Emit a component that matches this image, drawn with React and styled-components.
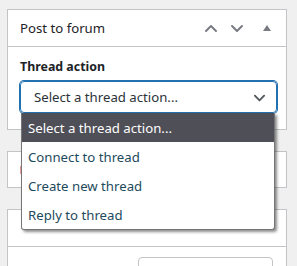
import * as React from 'react';
import styled, {createGlobalStyle} from 'styled-components';

const GlobalStyle = createGlobalStyle`
  body {
    margin: 0;
    background: #f0f0f1;
    font-family: "Noto Sans", "Open Sans", sans-serif;
    color: #1d2327;
  }
`;

const Sidebar = styled.div`
  width: 280px;
  padding: 9px 0 0 7px;
  height: 257px;
  overflow: hidden;
  display: flex;
  flex-direction: column;
  gap: 21px;
`;

const Panel = styled.div`
  position: relative;
  background: #fff;
  border: 1px solid #c3c4c7;
  flex-shrink: 0;
`;

const PanelHeader = styled.div`
  height: 36px;
  display: flex;
  align-items: center;
  padding: 0 6px 0 12px;
  border-bottom: ${(p) => (p.$open ? '1px solid #c3c4c7' : 'none')};
`;

const PanelTitle = styled.div`
  flex: 1;
  font-size: 13.2px;
  color: #1d2327;
`;

const HeaderButtons = styled.div`
  display: flex;
  align-items: center;
  gap: 8px;
  color: #787c82;
`;

const IconSlot = styled.span`
  width: ${(p) => p.$w || 18}px;
  display: flex;
  justify-content: center;
`;

const PanelBody = styled.div`
  padding: 11px 9px 16px 12px;
`;

const Label = styled.div`
  font-size: 12.4px;
  font-weight: 700;
  line-height: 18px;
  margin-bottom: 5px;
`;

const SelectBox = styled.div`
  height: 30px;
  border: 1px solid #2271b1;
  border-radius: 4px;
  box-shadow: 0 0 0 1px #2271b1;
  display: flex;
  align-items: center;
  padding: 0 10px 0 13px;
  font-size: 13.2px;
  color: #2c3338;
`;

const SelectText = styled.span`
  flex: 1;
`;

const Menu = styled.ul`
  position: absolute;
  left: 13px;
  top: 103px;
  width: 252px;
  margin: 0;
  padding: 0;
  list-style: none;
  background: #fff;
  border: 1px solid #767676;
  border-top: none;
  border-radius: 0 0 3px 3px;
  box-shadow: 2px 2px 3px rgba(0, 0, 0, 0.45);
  z-index: 5;
`;

const MenuItem = styled.li`
  height: 29px;
  display: flex;
  align-items: center;
  padding-left: 6px;
  font-size: 13.2px;
  color: ${(p) => (p.$active ? '#fff' : '#1d4a5c')};
  background: ${(p) => (p.$active ? '#4f4f58' : 'transparent')};
`;

const MiniHeader = styled.div`
  height: 35px;
  display: flex;
  align-items: center;
  padding-left: 12px;
`;

const Marker = styled.span`
  width: 4px;
  height: 8px;
  background: #d63638;
  opacity: 0.5;
`;

const TallHeader = styled.div`
  height: 36px;
  border-bottom: 1px solid #c3c4c7;
`;

const PanelRow = styled.div`
  display: flex;
  justify-content: flex-end;
  padding: 10px 13px 0 0;
`;

const TextInput = styled.div`
  width: 135px;
  height: 30px;
  border: 1px solid #c3c4c7;
  border-radius: 4px;
  padding: 6px 10px;
  box-sizing: border-box;
  font-size: 13px;
  line-height: 16px;
  color: #646970;
`;

const Chevron = ({up, color = '#787c82', size = 14}) => (
  <svg width={size} height={size} viewBox="0 0 14 14" fill="none">
    <path
      d={up ? 'M2 10 L7 5 L12 10' : 'M2 5 L7 10 L12 5'}
      stroke={color}
      strokeWidth="2"
      strokeLinecap="round"
      strokeLinejoin="round"
    />
  </svg>
);

const Triangle = () => (
  <svg width="10" height="8" viewBox="0 0 10 8">
    <path d="M5 1 L9 7 L1 7 Z" fill="#787c82" />
  </svg>
);

const options = ['Select a thread action...', 'Connect to thread', 'Create new thread', 'Reply to thread'];

export default function App() {
  return (
    <>
      <GlobalStyle />
      <Sidebar>
        <Panel>
          <PanelHeader $open>
            <PanelTitle>Post to forum</PanelTitle>
            <HeaderButtons>
              <IconSlot><Chevron up /></IconSlot>
              <IconSlot><Chevron /></IconSlot>
              <IconSlot $w={26}><Triangle /></IconSlot>
            </HeaderButtons>
          </PanelHeader>
          <PanelBody>
            <Label>Thread action</Label>
            <SelectBox>
              <SelectText>{options[0]}</SelectText>
              <Chevron color="#50575e" size={13} />
            </SelectBox>
          </PanelBody>
          <Menu>
            {options.map((o, i) => (
              <MenuItem key={o} $active={i === 0}>{o}</MenuItem>
            ))}
          </Menu>
        </Panel>
        <Panel>
          <MiniHeader>
            <Marker />
          </MiniHeader>
        </Panel>
        <Panel>
          <TallHeader />
          <PanelRow>
            <TextInput>Worldwide</TextInput>
          </PanelRow>
        </Panel>
      </Sidebar>
    </>
  );
}
